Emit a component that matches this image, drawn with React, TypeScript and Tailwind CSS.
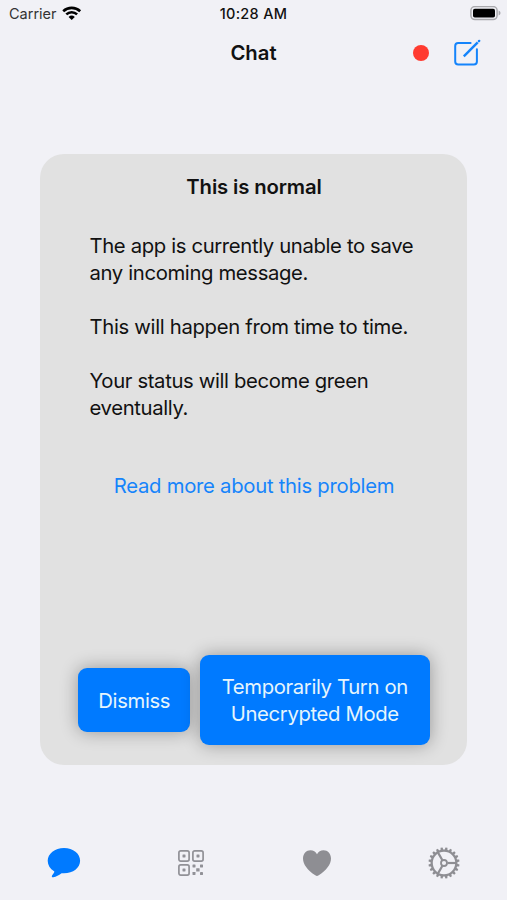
import React from "react";
import { clsx } from "clsx";

const WifiIcon = () => (
  <svg width="20" height="16" viewBox="0 0 20 16" fill="none" stroke="#000" strokeWidth="2.6">
    <path d="M1.2 5.2a12.5 12.5 0 0 1 17 0" />
    <path d="M4.3 8.4a7.8 7.8 0 0 1 10.8 0" />
    <path d="M9.7 14.1 6.6 11a4.500 4.500 0 0 1 6.200 0z" fill="#000" stroke="none" />
  </svg>
);

const BatteryIcon = () => (
  <svg width="31" height="16" viewBox="0 0 31 16">
    <rect x="0.9" y="0.6" width="26.2" height="13" rx="4" fill="#f1f1f6" stroke="#a9a9ad" strokeWidth="1.5" />
    <rect x="3" y="2.700" width="22" height="8.9" rx="1.8" fill="#000" />
    <path d="M28.6 4.6c1.2.5 1.9 1.4 1.9 2.5s-.7 2-1.9 2.5z" fill="#a9a9ad" />
  </svg>
);

const ComposeIcon = () => (
  <svg width="28" height="28" viewBox="0 0 28 28" fill="none" stroke="#1484fb" strokeWidth="2" strokeLinecap="round">
    <path d="M17.6 4H5.2a3 3 0 0 0-3 3v15.500a3 3 0 0 0 3 3h15.700a3 3 0 0 0 3-3V10.200" />
    <path d="M10.800 17.300 24.700 3.400" strokeWidth="2.400" strokeLinecap="butt" />
    <path d="m25.900 2.200.3-.3" strokeWidth="2.400" />
  </svg>
);

const BubbleIcon = () => (
  <svg width="34" height="32" viewBox="0 0 34 32" fill="#007aff">
    <path d="M17 1C7.8 1 .7 6.7.7 13.800c0 4.300 2.300 8 6.400 10.500.3.2.3.6.1 1-.5 1-1.200 1.800-2 2.900-.8 1.100-.3 2.400 1.100 2.100 2.900-.6 5.700-2.200 7.900-3.900.4-.3.800-.3 1.300-.2.5 0 1 .1 1.500.1 9.200 0 16.100-5.300 16.100-12.500S26.200 1 17 1z" />
  </svg>
);

const QrIcon = () => (
  <svg width="28" height="28" viewBox="0 0 28 28" fill="none" stroke="#919197" strokeWidth="1.7">
    <rect x="1.9" y="1.9" width="10.2" height="10.2" rx="1.8" />
    <rect x="15.9" y="1.9" width="10.2" height="10.2" rx="1.8" />
    <rect x="1.9" y="15.9" width="10.2" height="10.2" rx="1.8" />
    <g fill="#919197" stroke="none">
      <rect x="5.5" y="5.5" width="3" height="3" rx="0.4" />
      <rect x="19.5" y="5.5" width="3" height="3" rx="0.4" />
      <rect x="5.5" y="19.5" width="3" height="3" rx="0.4" />
      <rect x="15.5" y="15.5" width="3" height="3" rx="0.4" />
      <rect x="23" y="15.5" width="3" height="3" rx="0.4" />
      <rect x="19.2" y="19.2" width="3.4" height="3.4" rx="0.4" />
      <rect x="15.5" y="23" width="3" height="3" rx="0.4" />
      <rect x="23" y="23" width="3" height="3" rx="0.4" />
    </g>
  </svg>
);

const HeartIcon = () => (
  <svg width="30" height="28" viewBox="0 0 30 28" fill="#8e8e93">
    <path d="M15 27c-.5 0-1.1-.4-1.7-.8C5.8 21.3 1 15.5 1 9.4 1 4.6 4.3 1.2 8.5 1.2c2.9 0 5.1 1.5 6.5 4 1.4-2.5 3.6-4 6.5-4C25.7 1.2 29 4.6 29 9.4c0 6.1-4.8 11.9-12.3 16.8-.6.4-1.2.8-1.7.8z" />
  </svg>
);

const GEAR_TEETH = Array.from({ length: 20 }, (_, i) => i * 18);

const GearIcon = () => (
  <svg width="32" height="32" viewBox="-16 -16 32 32" fill="none" stroke="#8e8e93">
    {GEAR_TEETH.map((angle) => (
      <path
        key={angle}
        d="M12.5-1.5 15.5-1V1L12.5 1.5z"
        transform={`rotate(${angle + 9})`}
        fill="#8e8e93"
        stroke="none"
      />
    ))}
    <circle r="12.3" strokeWidth="2.2" />
    <circle r="3" strokeWidth="1.8" />
    {[0, 120, 240].map((angle) => (
      <path key={angle} d="M3.4 0H12" strokeWidth="2.2" transform={`rotate(${angle})`} />
    ))}
  </svg>
);

interface ActionButtonProps {
  children: React.ReactNode;
  className?: string;
}

const ActionButton: React.FC<ActionButtonProps> = ({ children, className }) => (
  <button
    className={clsx(
      "shrink-0 rounded-[9px] bg-[#007aff] text-center text-[#e6f5fc] shadow-[0_0_18px_rgba(0,0,0,0.33)]",
      className
    )}
  >
    {children}
  </button>
);

const TABS = [
  { name: "chat", icon: <BubbleIcon /> },
  { name: "qr", icon: <QrIcon /> },
  { name: "favorites", icon: <HeartIcon /> },
  { name: "settings", icon: <GearIcon /> },
];

const App: React.FC = () => {
  return (
    <div className="flex h-[900px] w-[507px] flex-col overflow-hidden bg-[#f1f1f6] font-['Inter','Liberation_Sans',sans-serif] text-[20.3px] leading-[27px] text-[#111]">
      <div className="grid h-[27px] grid-cols-3 items-center text-[14.5px]">
        <div className="flex items-center gap-[5px] pl-[9px] text-[#333]">
          <span>Carrier</span>
          <WifiIcon />
        </div>
        <span className="text-center font-medium tracking-[0.3px]">10:28 AM</span>
        <div className="flex justify-end pr-[6px]">
          <BatteryIcon />
        </div>
      </div>

      <header className="grid h-[51px] grid-cols-3 items-center">
        <div />
        <h1 className="text-center font-semibold">Chat</h1>
        <div className="flex items-center justify-end gap-6 pr-[26px]">
          <span className="size-4 rounded-full bg-[#ff3b30]" />
          <ComposeIcon />
        </div>
      </header>

      <main className="mx-auto mt-[76px] flex h-[611px] w-[427px] shrink-0 flex-col rounded-[24px] bg-[#e1e1e1] pt-[19px] tracking-[-0.36px]">
        <h2 className="pl-px text-center font-semibold tracking-[-0.13px]">This is normal</h2>
        <div className="mt-8 flex flex-col gap-[27px] pl-[49.5px]">
          <p>
            The app is currently unable to save
            <br />
            any incoming message.
          </p>
          <p className="tracking-[-0.32px]">This will happen from time to time.</p>
          <p>
            Your status will become green
            <br />
            eventually.
          </p>
        </div>
        <a className="mt-[51px] pl-px text-center tracking-[-0.27px] text-[#1684fb]">Read more about this problem</a>
        <div className="mt-auto mb-[20px] flex items-center justify-center gap-[9.5px] pl-px">
          <ActionButton className="h-[64px] w-[112px]">Dismiss</ActionButton>
          <ActionButton className="h-[90px] w-[230px]">
            Temporarily Turn on
            <br />
            Unecrypted Mode
          </ActionButton>
        </div>
      </main>

      <nav className="mt-[76px] grid h-[44px] grid-cols-4 pl-px">
        {TABS.map((tab) => (
          <div key={tab.name} className="flex items-center justify-center">
            {tab.icon}
          </div>
        ))}
      </nav>
    </div>
  );
};

export default App;
